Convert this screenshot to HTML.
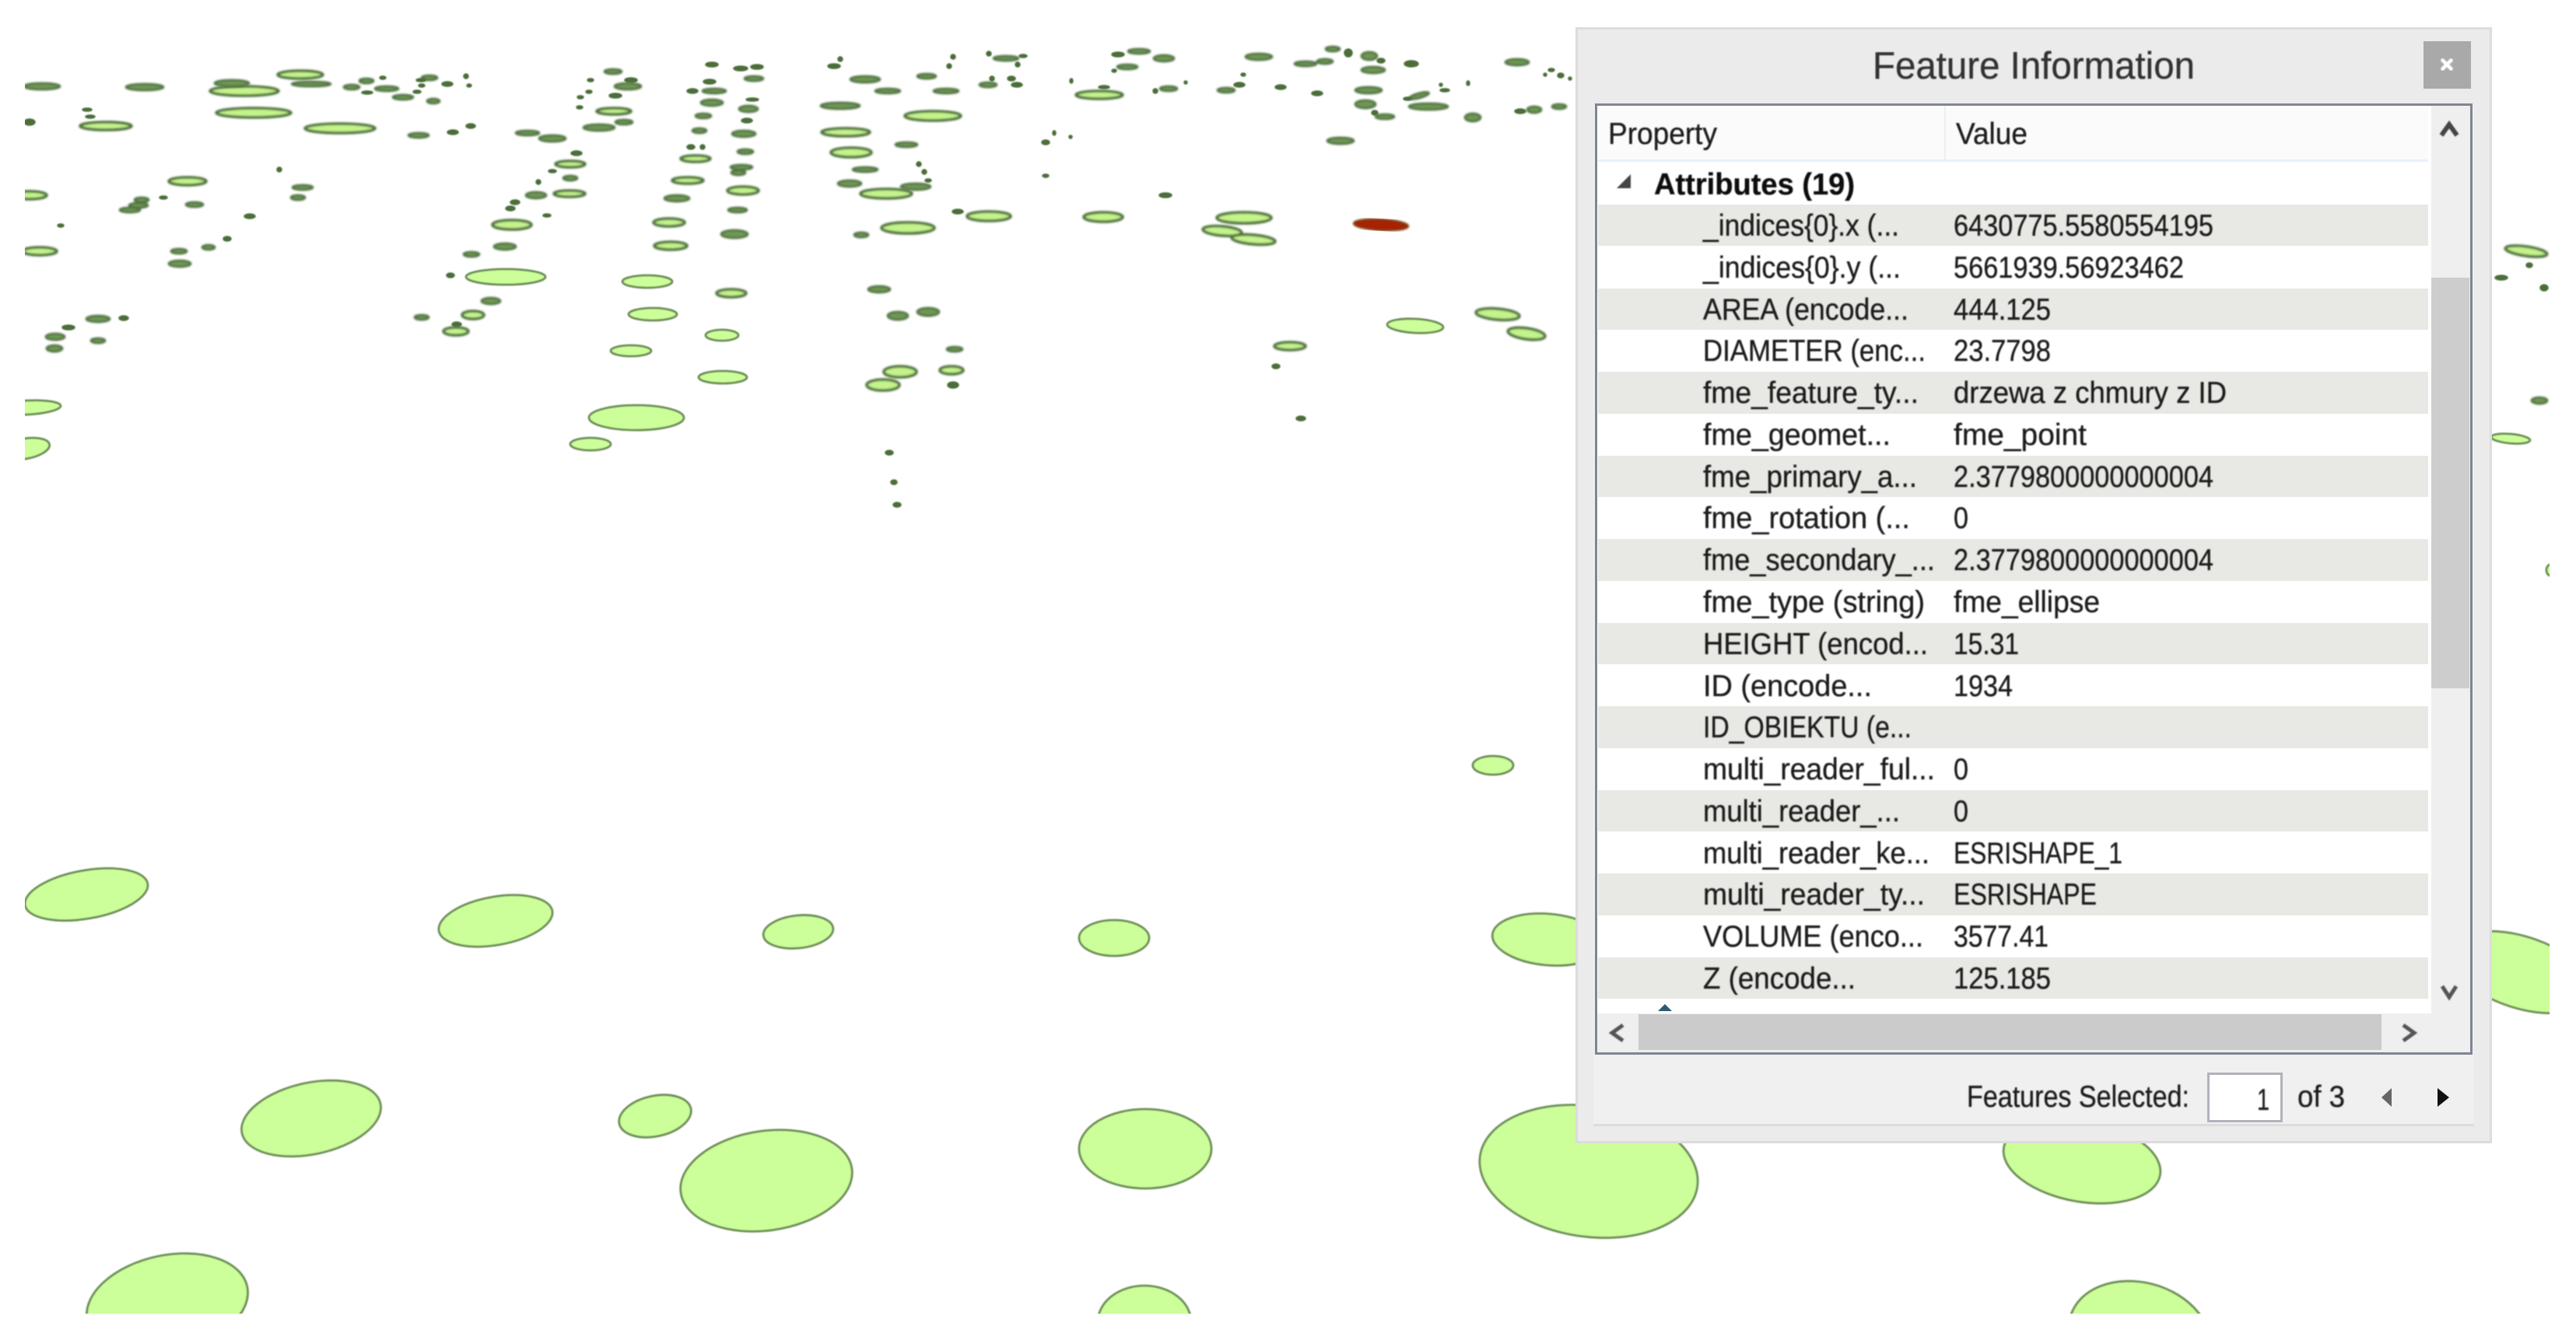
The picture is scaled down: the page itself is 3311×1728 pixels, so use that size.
<!DOCTYPE html>
<html lang="en">
<head>
<meta charset="utf-8">
<title>Feature Information</title>
<style>
html,body{margin:0;padding:0;background:#fff;width:3311px;height:1728px;overflow:hidden}
svg{display:block}
text{font-family:"Liberation Sans",sans-serif;fill:#1a1a1a;stroke:#1a1a1a;stroke-width:.35;font-size:39px}
.big ellipse{fill:#ccff99;stroke:#6a8a55;stroke-width:2.8}
.med ellipse{fill:#c4f38c;stroke:#4c6f3a;stroke-width:3.6}
.sm ellipse{fill:#6f9652;stroke:#4f7242;stroke-width:2.8}
.ti ellipse{fill:#4c6e3a;stroke:#4c6e3a;stroke-width:1.5}
</style>
</head>
<body>
<svg xmlns="http://www.w3.org/2000/svg" width="3311" height="1728" viewBox="0 0 3311 1728">
<defs>
<clipPath id="map"><rect x="32" y="0" width="3245" height="1689"/></clipPath>
<filter id="b1" x="-5%" y="-5%" width="110%" height="110%"><feGaussianBlur stdDeviation="1.2"/></filter>
<filter id="b2" x="-5%" y="-5%" width="110%" height="110%"><feGaussianBlur stdDeviation="0.8"/></filter>
<filter id="b3" x="-5%" y="-5%" width="110%" height="110%"><feGaussianBlur stdDeviation="0.7"/></filter>
</defs>
<rect width="3311" height="1728" fill="#fff"/>
<g clip-path="url(#map)">
<g class="big" filter="url(#b2)">
<ellipse cx="111" cy="1150" rx="80" ry="31" transform="rotate(-10 111 1150)"/>
<ellipse cx="637" cy="1184" rx="74" ry="31" transform="rotate(-10 637 1184)"/>
<ellipse cx="1026" cy="1198" rx="45" ry="21" transform="rotate(-6 1026 1198)"/>
<ellipse cx="400" cy="1438" rx="91" ry="46" transform="rotate(-12 400 1438)"/>
<ellipse cx="842" cy="1435" rx="47" ry="26" transform="rotate(-12 842 1435)"/>
<ellipse cx="985" cy="1518" rx="111" ry="64" transform="rotate(-8 985 1518)"/>
<ellipse cx="215" cy="1676" rx="105" ry="62" transform="rotate(-12 215 1676)"/>
<ellipse cx="1432" cy="1206" rx="45" ry="23"/>
<ellipse cx="1990" cy="1208" rx="72" ry="33" transform="rotate(5 1990 1208)"/>
<ellipse cx="1472" cy="1477" rx="85" ry="51"/>
<ellipse cx="2042" cy="1506" rx="141" ry="84" transform="rotate(8 2042 1506)"/>
<ellipse cx="2676" cy="1493" rx="102" ry="52" transform="rotate(10 2676 1493)"/>
<ellipse cx="1471" cy="1700" rx="60" ry="47"/>
<ellipse cx="2750" cy="1717" rx="92" ry="68" transform="rotate(15 2750 1717)"/>
<ellipse cx="3240" cy="1250" rx="95" ry="46" transform="rotate(18 3240 1250)"/>
<ellipse cx="1919" cy="984" rx="26" ry="12"/>
<ellipse cx="759" cy="571" rx="26" ry="8"/>
<ellipse cx="818" cy="537" rx="61" ry="16"/>
<ellipse cx="929" cy="485" rx="31" ry="8"/>
<ellipse cx="811" cy="451" rx="26" ry="7"/>
<ellipse cx="928" cy="431" rx="21" ry="7"/>
<ellipse cx="839" cy="404" rx="31" ry="8"/>
<ellipse cx="832" cy="362" rx="32" ry="8"/>
<ellipse cx="650" cy="356" rx="51" ry="10"/>
<ellipse cx="35" cy="524" rx="43" ry="9" transform="rotate(-3 35 524)"/>
<ellipse cx="32" cy="577" rx="32" ry="13" transform="rotate(-10 32 577)"/>
<ellipse cx="1819" cy="419" rx="36" ry="9" transform="rotate(3 1819 419)"/>
<ellipse cx="3227" cy="564" rx="25" ry="6" transform="rotate(5 3227 564)"/>
<ellipse cx="3278" cy="733" rx="5" ry="7"/>
</g>
<g class="med" filter="url(#b1)">
<ellipse cx="314" cy="117" rx="44" ry="6"/>
<ellipse cx="386" cy="96" rx="29" ry="5"/>
<ellipse cx="136" cy="162" rx="33" ry="5"/>
<ellipse cx="326" cy="145" rx="48" ry="6"/>
<ellipse cx="437" cy="165" rx="45" ry="6"/>
<ellipse cx="658" cy="289" rx="25" ry="6"/>
<ellipse cx="241" cy="233" rx="24" ry="5"/>
<ellipse cx="38" cy="251" rx="22" ry="5"/>
<ellipse cx="51" cy="323" rx="22" ry="5"/>
<ellipse cx="789" cy="143" rx="22" ry="4"/>
<ellipse cx="733" cy="211" rx="19" ry="4"/>
<ellipse cx="732" cy="249" rx="20" ry="4"/>
<ellipse cx="894" cy="204" rx="19" ry="4"/>
<ellipse cx="884" cy="232" rx="20" ry="4"/>
<ellipse cx="955" cy="245" rx="20" ry="5"/>
<ellipse cx="860" cy="286" rx="20" ry="5"/>
<ellipse cx="862" cy="316" rx="21" ry="5"/>
<ellipse cx="1199" cy="149" rx="36" ry="6"/>
<ellipse cx="1087" cy="170" rx="31" ry="5"/>
<ellipse cx="1094" cy="196" rx="26" ry="6"/>
<ellipse cx="1139" cy="249" rx="33" ry="6"/>
<ellipse cx="1271" cy="278" rx="28" ry="6"/>
<ellipse cx="1418" cy="279" rx="25" ry="6"/>
<ellipse cx="1599" cy="280" rx="35" ry="7"/>
<ellipse cx="1167" cy="293" rx="34" ry="7"/>
<ellipse cx="1571" cy="297" rx="25" ry="6" transform="rotate(5 1571 297)"/>
<ellipse cx="1611" cy="308" rx="28" ry="6" transform="rotate(5 1611 308)"/>
<ellipse cx="1413" cy="122" rx="30" ry="5"/>
<ellipse cx="1157" cy="478" rx="21" ry="7"/>
<ellipse cx="1135" cy="495" rx="21" ry="7"/>
<ellipse cx="1223" cy="476" rx="15" ry="5"/>
<ellipse cx="1925" cy="404" rx="28" ry="7" transform="rotate(5 1925 404)"/>
<ellipse cx="1962" cy="429" rx="24" ry="7" transform="rotate(8 1962 429)"/>
<ellipse cx="1658" cy="445" rx="20" ry="5"/>
<ellipse cx="3247" cy="323" rx="27" ry="6" transform="rotate(8 3247 323)"/>
<ellipse cx="586" cy="426" rx="16" ry="5"/>
<ellipse cx="940" cy="377" rx="19" ry="5"/>
<ellipse cx="608" cy="405" rx="14" ry="5"/>
</g>
<g class="sm" filter="url(#b1)">
<ellipse cx="54" cy="111" rx="23" ry="4"/><ellipse cx="186" cy="112" rx="24" ry="4"/><ellipse cx="298" cy="107" rx="22" ry="4"/><ellipse cx="400" cy="108" rx="25" ry="3"/>
<ellipse cx="452" cy="112" rx="10" ry="3"/><ellipse cx="471" cy="104" rx="9" ry="3"/><ellipse cx="497" cy="114" rx="15" ry="3"/><ellipse cx="518" cy="125" rx="13" ry="3"/>
<ellipse cx="557" cy="130" rx="8" ry="3"/><ellipse cx="552" cy="100" rx="10" ry="3"/><ellipse cx="538" cy="174" rx="13" ry="3"/><ellipse cx="678" cy="171" rx="15" ry="3"/>
<ellipse cx="710" cy="178" rx="17" ry="4"/><ellipse cx="770" cy="164" rx="20" ry="4"/><ellipse cx="802" cy="157" rx="11" ry="3"/><ellipse cx="807" cy="111" rx="17" ry="4"/>
<ellipse cx="788" cy="92" rx="11" ry="3"/><ellipse cx="733" cy="229" rx="9" ry="3"/><ellipse cx="689" cy="251" rx="13" ry="4"/><ellipse cx="649" cy="317" rx="14" ry="4"/>
<ellipse cx="606" cy="327" rx="10" ry="3"/><ellipse cx="383" cy="254" rx="9" ry="3"/><ellipse cx="389" cy="241" rx="13" ry="3"/><ellipse cx="182" cy="257" rx="9" ry="3"/>
<ellipse cx="167" cy="270" rx="13" ry="3"/><ellipse cx="178" cy="264" rx="12" ry="3"/><ellipse cx="250" cy="263" rx="11" ry="3"/><ellipse cx="268" cy="318" rx="8" ry="3"/>
<ellipse cx="230" cy="323" rx="10" ry="3"/><ellipse cx="969" cy="101" rx="12" ry="3"/><ellipse cx="918" cy="117" rx="15" ry="3"/><ellipse cx="915" cy="132" rx="14" ry="4"/>
<ellipse cx="962" cy="140" rx="12" ry="4"/><ellipse cx="904" cy="149" rx="10" ry="3"/><ellipse cx="899" cy="168" rx="9" ry="3"/><ellipse cx="956" cy="172" rx="15" ry="4"/>
<ellipse cx="958" cy="195" rx="10" ry="3"/><ellipse cx="953" cy="215" rx="14" ry="3"/><ellipse cx="949" cy="222" rx="9" ry="3"/><ellipse cx="870" cy="255" rx="16" ry="4"/>
<ellipse cx="948" cy="270" rx="12" ry="3"/><ellipse cx="944" cy="301" rx="17" ry="5"/><ellipse cx="231" cy="339" rx="14" ry="4"/><ellipse cx="631" cy="387" rx="12" ry="4"/>
<ellipse cx="126" cy="410" rx="15" ry="4"/><ellipse cx="71" cy="433" rx="12" ry="4"/><ellipse cx="126" cy="438" rx="9" ry="3"/><ellipse cx="70" cy="448" rx="10" ry="4"/>
<ellipse cx="542" cy="408" rx="9" ry="3"/><ellipse cx="1293" cy="75" rx="16" ry="3"/><ellipse cx="1464" cy="66" rx="14" ry="3"/><ellipse cx="1496" cy="75" rx="13" ry="4"/>
<ellipse cx="1449" cy="86" rx="13" ry="3"/><ellipse cx="1618" cy="73" rx="17" ry="4"/><ellipse cx="1713" cy="63" rx="9" ry="3"/><ellipse cx="1678" cy="82" rx="14" ry="3"/>
<ellipse cx="1703" cy="79" rx="10" ry="3"/><ellipse cx="1760" cy="72" rx="10" ry="5"/><ellipse cx="1765" cy="90" rx="15" ry="4"/><ellipse cx="1950" cy="80" rx="15" ry="4"/>
<ellipse cx="1112" cy="102" rx="19" ry="4"/><ellipse cx="1191" cy="98" rx="12" ry="3"/><ellipse cx="1270" cy="109" rx="11" ry="3"/><ellipse cx="1141" cy="117" rx="16" ry="3"/>
<ellipse cx="1216" cy="117" rx="16" ry="3"/><ellipse cx="1502" cy="114" rx="11" ry="3"/><ellipse cx="1576" cy="116" rx="11" ry="3"/><ellipse cx="1759" cy="116" rx="17" ry="4"/>
<ellipse cx="1824" cy="123" rx="13" ry="3" transform="rotate(-15 1824 123)"/><ellipse cx="1080" cy="136" rx="25" ry="4"/><ellipse cx="1755" cy="134" rx="13" ry="5"/><ellipse cx="1836" cy="137" rx="25" ry="4"/>
<ellipse cx="1780" cy="150" rx="12" ry="3"/><ellipse cx="1893" cy="151" rx="10" ry="5"/><ellipse cx="1972" cy="141" rx="9" ry="4"/><ellipse cx="2004" cy="137" rx="9" ry="3"/>
<ellipse cx="1165" cy="186" rx="14" ry="3"/><ellipse cx="1723" cy="181" rx="17" ry="4"/><ellipse cx="1112" cy="218" rx="16" ry="3"/><ellipse cx="1092" cy="236" rx="15" ry="4"/>
<ellipse cx="1177" cy="240" rx="19" ry="4"/><ellipse cx="1107" cy="302" rx="9" ry="3"/><ellipse cx="1130" cy="372" rx="14" ry="4"/><ellipse cx="1193" cy="401" rx="14" ry="5"/>
<ellipse cx="1154" cy="406" rx="13" ry="5"/><ellipse cx="1227" cy="449" rx="10" ry="3"/><ellipse cx="3264" cy="515" rx="10" ry="4"/>
</g>
<g class="ti" filter="url(#b2)">
<ellipse cx="492" cy="100" rx="4" ry="2"/><ellipse cx="472" cy="119" rx="7" ry="2"/><ellipse cx="536" cy="118" rx="5" ry="2"/><ellipse cx="541" cy="103" rx="6" ry="2"/>
<ellipse cx="575" cy="108" rx="7" ry="3"/><ellipse cx="542" cy="110" rx="4" ry="2"/><ellipse cx="599" cy="98" rx="3" ry="3"/><ellipse cx="603" cy="110" rx="3" ry="2"/>
<ellipse cx="112" cy="141" rx="6" ry="2"/><ellipse cx="116" cy="150" rx="6" ry="2"/><ellipse cx="38" cy="157" rx="7" ry="4"/><ellipse cx="582" cy="170" rx="7" ry="3"/>
<ellipse cx="605" cy="162" rx="6" ry="3"/><ellipse cx="811" cy="103" rx="8" ry="3"/><ellipse cx="759" cy="103" rx="4" ry="2"/><ellipse cx="757" cy="118" rx="4" ry="2"/>
<ellipse cx="791" cy="123" rx="8" ry="3"/><ellipse cx="746" cy="125" rx="4" ry="2"/><ellipse cx="745" cy="138" rx="4" ry="2"/><ellipse cx="741" cy="197" rx="7" ry="3"/>
<ellipse cx="710" cy="220" rx="5" ry="2"/><ellipse cx="692" cy="234" rx="3" ry="3"/><ellipse cx="662" cy="260" rx="6" ry="3"/><ellipse cx="656" cy="268" rx="6" ry="3"/>
<ellipse cx="703" cy="277" rx="5" ry="2"/><ellipse cx="359" cy="218" rx="3" ry="3"/><ellipse cx="210" cy="254" rx="5" ry="2"/><ellipse cx="321" cy="278" rx="7" ry="3"/>
<ellipse cx="78" cy="290" rx="4" ry="2"/><ellipse cx="292" cy="307" rx="5" ry="3"/><ellipse cx="915" cy="83" rx="8" ry="3"/><ellipse cx="952" cy="88" rx="9" ry="3"/>
<ellipse cx="973" cy="86" rx="8" ry="3"/><ellipse cx="912" cy="105" rx="8" ry="3"/><ellipse cx="890" cy="117" rx="7" ry="3"/><ellipse cx="967" cy="128" rx="8" ry="2"/>
<ellipse cx="960" cy="155" rx="7" ry="3"/><ellipse cx="888" cy="189" rx="5" ry="3"/><ellipse cx="903" cy="189" rx="3" ry="3"/><ellipse cx="579" cy="354" rx="5" ry="3"/>
<ellipse cx="587" cy="417" rx="6" ry="3"/><ellipse cx="159" cy="409" rx="6" ry="3"/><ellipse cx="88" cy="421" rx="8" ry="3"/>
<ellipse cx="1080" cy="76" rx="3" ry="3"/><ellipse cx="1072" cy="85" rx="8" ry="3"/><ellipse cx="1225" cy="73" rx="3" ry="3"/><ellipse cx="1220" cy="85" rx="3" ry="3"/>
<ellipse cx="1271" cy="69" rx="3" ry="3"/><ellipse cx="1315" cy="72" rx="5" ry="2"/><ellipse cx="1308" cy="83" rx="3" ry="3"/><ellipse cx="1437" cy="70" rx="8" ry="3"/>
<ellipse cx="1432" cy="91" rx="3" ry="2"/><ellipse cx="1733" cy="68" rx="5" ry="5"/><ellipse cx="1775" cy="78" rx="5" ry="3"/><ellipse cx="1814" cy="82" rx="9" ry="4"/>
<ellipse cx="1994" cy="90" rx="4" ry="2"/><ellipse cx="2006" cy="97" rx="4" ry="3"/><ellipse cx="2018" cy="101" rx="2" ry="2"/><ellipse cx="1986" cy="96" rx="2" ry="2"/>
<ellipse cx="1598" cy="96" rx="3" ry="2"/><ellipse cx="1275" cy="101" rx="3" ry="3"/><ellipse cx="1300" cy="101" rx="5" ry="3"/><ellipse cx="1307" cy="109" rx="7" ry="3"/>
<ellipse cx="1377" cy="104" rx="2" ry="3"/><ellipse cx="1524" cy="106" rx="2" ry="2"/><ellipse cx="1419" cy="112" rx="7" ry="2"/><ellipse cx="1485" cy="117" rx="3" ry="3"/>
<ellipse cx="1593" cy="109" rx="7" ry="3"/><ellipse cx="1646" cy="112" rx="7" ry="3"/><ellipse cx="1693" cy="120" rx="7" ry="3"/><ellipse cx="1809" cy="127" rx="5" ry="2"/>
<ellipse cx="1852" cy="109" rx="2" ry="2"/><ellipse cx="1857" cy="116" rx="6" ry="2"/><ellipse cx="1887" cy="107" rx="2" ry="3"/><ellipse cx="1767" cy="145" rx="4" ry="3"/>
<ellipse cx="1954" cy="143" rx="7" ry="3"/><ellipse cx="1355" cy="171" rx="2" ry="3"/><ellipse cx="1376" cy="176" rx="2" ry="2"/><ellipse cx="1344" cy="183" rx="5" ry="3"/>
<ellipse cx="1181" cy="211" rx="3" ry="3"/><ellipse cx="1188" cy="221" rx="3" ry="3"/><ellipse cx="1344" cy="226" rx="4" ry="2"/><ellipse cx="1193" cy="232" rx="4" ry="2"/>
<ellipse cx="1498" cy="251" rx="8" ry="3"/><ellipse cx="1231" cy="272" rx="7" ry="3"/><ellipse cx="1225" cy="495" rx="7" ry="4"/><ellipse cx="1143" cy="582" rx="5" ry="3"/>
<ellipse cx="1149" cy="620" rx="4" ry="3"/><ellipse cx="1153" cy="649" rx="5" ry="3"/><ellipse cx="1640" cy="471" rx="5" ry="3"/><ellipse cx="1672" cy="538" rx="6" ry="3"/>
<ellipse cx="3251" cy="341" rx="4" ry="3"/><ellipse cx="3215" cy="357" rx="8" ry="3"/><ellipse cx="3270" cy="370" rx="5" ry="4"/>
</g>
<ellipse cx="1775" cy="289" rx="35" ry="7" transform="rotate(3 1775 289)" fill="#a82200" stroke="#7c3a18" stroke-width="2.5" filter="url(#b1)"/>
</g>

<!-- panel -->
<rect x="2025" y="35" width="1178" height="1435" fill="#dcdcdc"/>
<rect x="2028" y="38" width="1172" height="1429" fill="#ebebeb"/>
<rect x="2048" y="136" width="1132" height="1312" fill="#f0f0f0"/>
<rect x="2048" y="1445" width="1132" height="3" fill="#dcdcdc"/>
<rect x="3115" y="53" width="61" height="61" fill="#a9a9a9"/>
<path d="M3138 76L3152 90M3152 76L3138 90" stroke="#fff" stroke-width="4.5" fill="none" filter="url(#b3)"/>
<rect x="2050" y="133" width="1128" height="1223" fill="#7f8592"/>
<rect x="2053" y="136" width="1122" height="1217" fill="#fff"/>
<rect x="2054" y="136" width="1067" height="69" fill="#fbfbfb"/>
<rect x="2054" y="205" width="1067" height="3" fill="#e8f0fa"/>
<rect x="2499" y="136" width="2" height="69" fill="#e8eff7"/>
<rect x="3125" y="136" width="50" height="1217" fill="#efefef"/>
<rect x="3125" y="357" width="49" height="528" fill="#cdcdcd"/>
<rect x="2053" y="1303" width="1122" height="50" fill="#efefef"/>
<rect x="2106" y="1304" width="955" height="46" fill="#cbcbcb"/>
<g fill="#e8e8e4">
<rect x="2054" y="263" width="1067" height="53"/>
<rect x="2054" y="371" width="1067" height="53"/>
<rect x="2054" y="478" width="1067" height="54"/>
<rect x="2054" y="586" width="1067" height="53"/>
<rect x="2054" y="693" width="1067" height="54"/>
<rect x="2054" y="801" width="1067" height="53"/>
<rect x="2054" y="908" width="1067" height="54"/>
<rect x="2054" y="1016" width="1067" height="53"/>
<rect x="2054" y="1123" width="1067" height="54"/>
<rect x="2054" y="1231" width="1067" height="53"/>
</g>
<path d="M2131 1300L2140 1291L2149 1300Z" fill="#2f5a73"/>
<g filter="url(#b3)">
<path d="M3138 174L3148 160L3158 174" stroke="#444" stroke-width="6" fill="none"/>
<path d="M3139 1268L3148 1282L3157 1268" stroke="#555" stroke-width="5" fill="none"/>
<path d="M2086 1318L2072 1328L2086 1338" stroke="#555" stroke-width="5" fill="none"/>
<path d="M3089 1318L3103 1328L3089 1338" stroke="#555" stroke-width="5" fill="none"/>
<path d="M2096 224L2096 242L2078 242Z" fill="#444"/>
</g>
<rect x="2837" y="1379" width="97" height="64" fill="#b0b3bb"/>
<rect x="2840" y="1382" width="91" height="58" fill="#fff"/>
<path d="M3074 1399L3074 1423L3061 1411Z" fill="#666"/>
<path d="M3133 1399L3133 1423L3148 1411Z" fill="#111"/>

<g filter="url(#b3)">
<text x="2407" y="101" textLength="414" lengthAdjust="spacingAndGlyphs" style="font-size:49px;fill:#333;stroke:#333">Feature Information</text>
<text x="2067" y="185" textLength="140" lengthAdjust="spacingAndGlyphs">Property</text>
<text x="2514" y="185" textLength="92" lengthAdjust="spacingAndGlyphs">Value</text>
<text x="2126" y="250" textLength="258" lengthAdjust="spacingAndGlyphs" style="font-weight:700;fill:#111;stroke:#111">Attributes (19)</text>

<text x="2189" y="303" textLength="252" lengthAdjust="spacingAndGlyphs">_indices{0}.x (...</text><text x="2511" y="303" textLength="334" lengthAdjust="spacingAndGlyphs">6430775.5580554195</text>
<text x="2189" y="357" textLength="254" lengthAdjust="spacingAndGlyphs">_indices{0}.y (...</text><text x="2511" y="357" textLength="296" lengthAdjust="spacingAndGlyphs">5661939.56923462</text>
<text x="2189" y="411" textLength="264" lengthAdjust="spacingAndGlyphs">AREA (encode...</text><text x="2511" y="411" textLength="125" lengthAdjust="spacingAndGlyphs">444.125</text>
<text x="2189" y="464" textLength="286" lengthAdjust="spacingAndGlyphs">DIAMETER (enc...</text><text x="2511" y="464" textLength="125" lengthAdjust="spacingAndGlyphs">23.7798</text>
<text x="2189" y="518" textLength="277" lengthAdjust="spacingAndGlyphs">fme_feature_ty...</text><text x="2511" y="518" textLength="351" lengthAdjust="spacingAndGlyphs">drzewa z chmury z ID</text>
<text x="2189" y="572" textLength="241" lengthAdjust="spacingAndGlyphs">fme_geomet...</text><text x="2511" y="572" textLength="171" lengthAdjust="spacingAndGlyphs">fme_point</text>
<text x="2189" y="626" textLength="275" lengthAdjust="spacingAndGlyphs">fme_primary_a...</text><text x="2511" y="626" textLength="334" lengthAdjust="spacingAndGlyphs">2.3779800000000004</text>
<text x="2189" y="679" textLength="266" lengthAdjust="spacingAndGlyphs">fme_rotation (...</text><text x="2511" y="679" textLength="19" lengthAdjust="spacingAndGlyphs">0</text>
<text x="2189" y="733" textLength="298" lengthAdjust="spacingAndGlyphs">fme_secondary_...</text><text x="2511" y="733" textLength="334" lengthAdjust="spacingAndGlyphs">2.3779800000000004</text>
<text x="2189" y="787" textLength="285" lengthAdjust="spacingAndGlyphs">fme_type (string)</text><text x="2511" y="787" textLength="188" lengthAdjust="spacingAndGlyphs">fme_ellipse</text>
<text x="2189" y="841" textLength="289" lengthAdjust="spacingAndGlyphs">HEIGHT (encod...</text><text x="2511" y="841" textLength="84" lengthAdjust="spacingAndGlyphs">15.31</text>
<text x="2189" y="895" textLength="217" lengthAdjust="spacingAndGlyphs">ID (encode...</text><text x="2511" y="895" textLength="76" lengthAdjust="spacingAndGlyphs">1934</text>
<text x="2189" y="948" textLength="268" lengthAdjust="spacingAndGlyphs">ID_OBIEKTU (e...</text>
<text x="2189" y="1002" textLength="298" lengthAdjust="spacingAndGlyphs">multi_reader_ful...</text><text x="2511" y="1002" textLength="19" lengthAdjust="spacingAndGlyphs">0</text>
<text x="2189" y="1056" textLength="253" lengthAdjust="spacingAndGlyphs">multi_reader_...</text><text x="2511" y="1056" textLength="19" lengthAdjust="spacingAndGlyphs">0</text>
<text x="2189" y="1110" textLength="291" lengthAdjust="spacingAndGlyphs">multi_reader_ke...</text><text x="2511" y="1110" textLength="217" lengthAdjust="spacingAndGlyphs">ESRISHAPE_1</text>
<text x="2189" y="1163" textLength="285" lengthAdjust="spacingAndGlyphs">multi_reader_ty...</text><text x="2511" y="1163" textLength="184" lengthAdjust="spacingAndGlyphs">ESRISHAPE</text>
<text x="2189" y="1217" textLength="283" lengthAdjust="spacingAndGlyphs">VOLUME (enco...</text><text x="2511" y="1217" textLength="122" lengthAdjust="spacingAndGlyphs">3577.41</text>
<text x="2189" y="1271" textLength="196" lengthAdjust="spacingAndGlyphs">Z (encode...</text><text x="2511" y="1271" textLength="125" lengthAdjust="spacingAndGlyphs">125.185</text>

<text x="2528" y="1423" textLength="286" lengthAdjust="spacingAndGlyphs">Features Selected:</text>
<text x="2901" y="1427" textLength="16" lengthAdjust="spacingAndGlyphs">1</text>
<text x="2953" y="1423" textLength="61" lengthAdjust="spacingAndGlyphs">of 3</text>
</g>
</svg>
</body>
</html>
